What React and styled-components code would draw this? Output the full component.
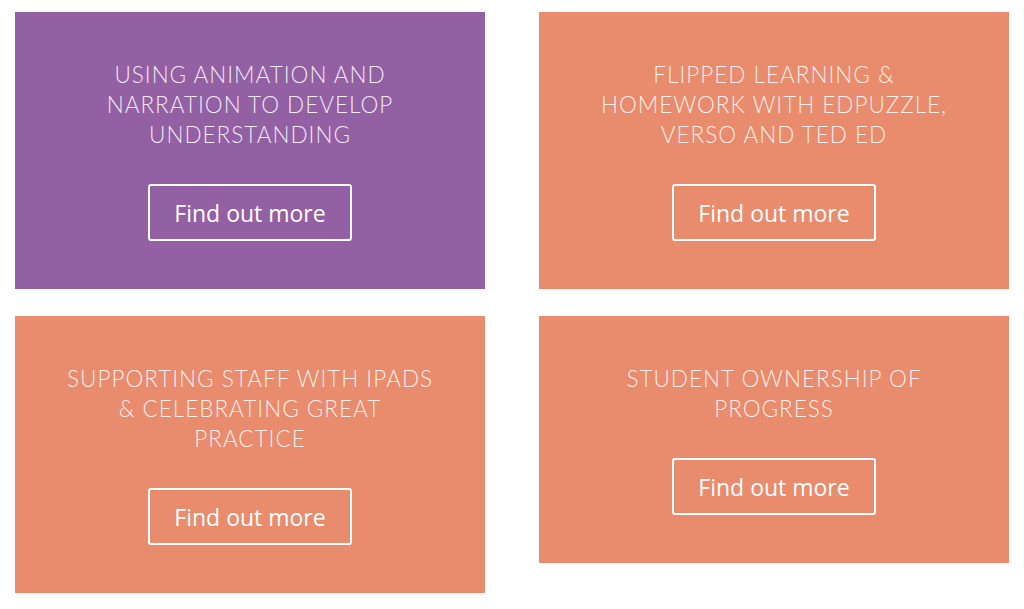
import React from 'react'
import styled, { createGlobalStyle } from 'styled-components'

const Global = createGlobalStyle`
  body {
    margin: 0;
    background: #ffffff;
    font-family: "Lato", "Open Sans", sans-serif;
  }
`;

const Grid = styled.div`
  display: grid;
  grid-template-columns: 470px 470px;
  column-gap: 54px;
  row-gap: 27px;
  align-items: start;
  padding: 12px 15px;
`;

const Card = styled.div`
  background: ${props => props.tone === 'purple' ? '#9360a4' : '#e98b6d'};
  padding: 48px 48px 48px;
  display: flex;
  flex-direction: column;
  align-items: center;
`;

const Title = styled.h2`
  margin: 0;
  font-family: "Lato", sans-serif;
  font-weight: 300;
  font-size: 22.5px;
  line-height: 30px;
  letter-spacing: 1px;
  text-transform: uppercase;
  text-align: center;
  color: rgba(255, 255, 255, 0.88);
`;

const Button = styled.a`
  margin-top: 34px;
  display: block;
  box-sizing: border-box;
  height: 57px;
  padding: 1px 24px 0;
  border: 2px solid #ffffff;
  border-radius: 3px;
  font-family: "Open Sans", sans-serif;
  font-size: 23px;
  line-height: 52px;
  color: #ffffff;
  text-decoration: none;
`;

const items = [
  { title: 'Using animation and narration to develop understanding', tone: 'purple' },
  { title: 'Flipped learning & homework with edpuzzle, verso and ted ed', tone: 'orange' },
  { title: 'Supporting staff with iPads & celebrating great practice', tone: 'orange' },
  { title: 'Student ownership of progress', tone: 'orange' },
];

function App() {
  return (
    <>
      <Global />
      <Grid>
        {items.map(item => (
          <Card key={item.title} tone={item.tone}>
            <Title>{item.title}</Title>
            <Button href="#">Find out more</Button>
          </Card>
        ))}
      </Grid>
    </>
  );
}

export default App;
